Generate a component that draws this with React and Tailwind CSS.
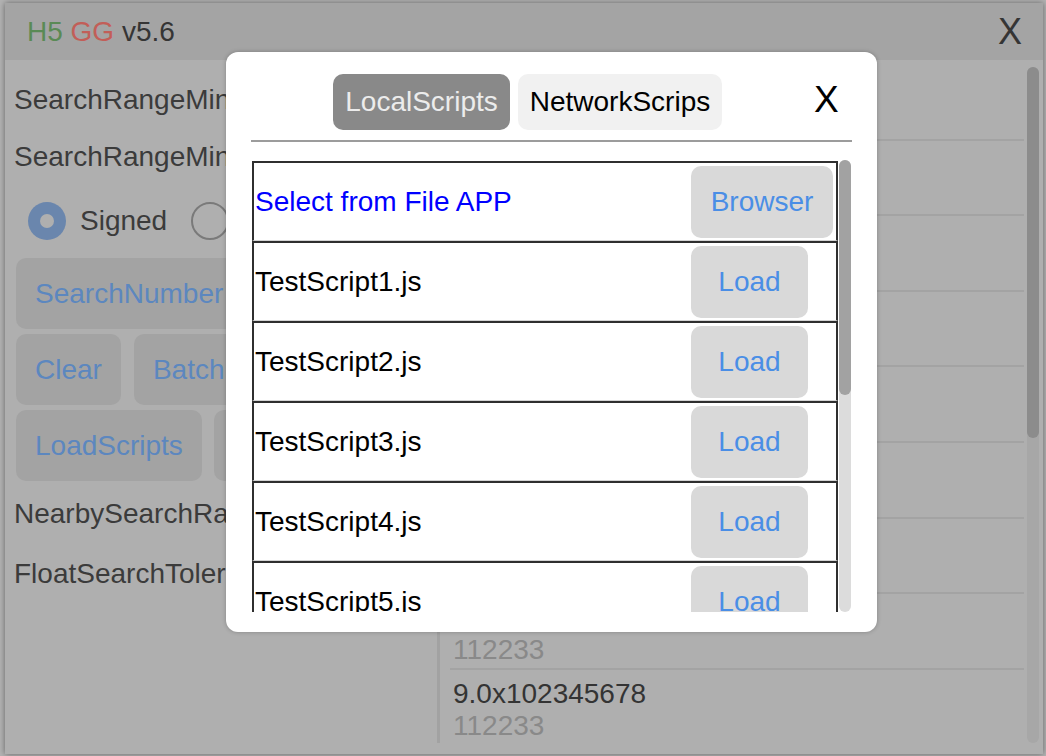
const font = { fontFamily: '"Liberation Sans", Arial, sans-serif' };

const rightRows = [
  { v: "1.0x102345678", s: "112233" },
  { v: "2.0x102345678", s: "112233" },
  { v: "3.0x102345678", s: "112233" },
  { v: "4.0x102345678", s: "112233" },
  { v: "5.0x102345678", s: "112233" },
  { v: "6.0x102345678", s: "112233" },
  { v: "7.0x102345678", s: "112233" },
  { v: "8.0x102345678", s: "112233" },
  { v: "9.0x102345678", s: "112233" },
];

const scripts = ["TestScript1.js", "TestScript2.js", "TestScript3.js", "TestScript4.js", "TestScript5.js"];

function GreyButton({ children, className = "" }) {
  return (
    <div className={`flex h-[71px] items-center rounded-[10px] bg-[#a3a3a3] px-[19px] text-[28px] text-[#5c87bf] ${className}`}>
      {children}
    </div>
  );
}

function ScriptRow({ name, label, blue, wide }) {
  return (
    <div className="flex h-[80px] shrink-0 items-center border-x-2 border-t-2 border-[#2f2f2f] border-b border-b-[#d4d4d4]">
      <div className={`w-[437px] pl-px text-[28px] ${blue ? "text-[#0000ff]" : "text-black"}`}>{name}</div>
      <div
        className={`flex h-[72px] items-center justify-center rounded-[10px] bg-[#d9d9d9] text-[28px] text-[#4a8ee6] ${wide ? "w-[142px]" : "w-[117px]"}`}
      >
        {label}
      </div>
    </div>
  );
}

export default function App() {
  return (
    <div className="relative h-[756px] w-[1046px] overflow-hidden bg-[#b3b3b3] pl-[5px] pt-[3px]" style={font}>
      {/* background window (dimmed) */}
      <div className="flex h-[751px] w-[1038px] flex-col bg-[#afafaf] shadow-[0_0_6px_rgba(0,0,0,0.45)]">
        <div className="flex h-[57px] shrink-0 items-center justify-between bg-[#a4a4a4] pl-[22px] pr-[21px]">
          <div className="text-[28px] text-[#353535]">
            <span className="text-[#5a8a55]">H5</span> <span className="text-[#c25e58]">GG</span> v5.6
          </div>
          <div className="text-[36px] leading-none text-[#353535]">X</div>
        </div>

        <div className="flex min-h-0 flex-1">
          {/* left settings column */}
          <div className="w-[432px] shrink-0 pl-[9px] text-[28px] text-[#3b3b3b]">
            <div className="mt-[24px] leading-[32px]">SearchRangeMin</div>
            <div className="mt-[25px] leading-[32px]">SearchRangeMin</div>
            <div className="mt-[29px] flex h-[38px] items-center">
              <div className="ml-[14px] flex h-[38px] w-[38px] items-center justify-center rounded-full bg-[#6a86ad]">
                <div className="h-[14px] w-[14px] rounded-full bg-[#afafaf]" />
              </div>
              <span className="ml-[14px]">Signed</span>
              <div className="ml-[24px] h-[38px] w-[38px] rounded-full border-2 border-[#7a7a7a]" />
              <span className="ml-[14px]">Unsigned</span>
            </div>
            <div className="ml-[2px] mt-[18px] flex">
              <GreyButton className="w-[380px]">SearchNumber</GreyButton>
            </div>
            <div className="ml-[2px] mt-[5px] flex gap-[13px]">
              <GreyButton>Clear</GreyButton>
              <GreyButton>BatchEdit</GreyButton>
            </div>
            <div className="ml-[2px] mt-[5px] flex gap-[12px]">
              <GreyButton>LoadScripts</GreyButton>
              <GreyButton>Reset</GreyButton>
            </div>
            <div className="mt-[17px] leading-[32px]">NearbySearchRange</div>
            <div className="mt-[28px] leading-[32px]">FloatSearchTolerance</div>
          </div>

          {/* right results column */}
          <div className="flex min-h-0 flex-1 pb-[11px] pt-[5px]">
            <div className="w-[3px] shrink-0 bg-[#a2a2a2]" />
            <div className="min-w-0 flex-1 overflow-hidden pl-[10px] pr-[3px]">
              {rightRows.map((r) => (
                <div key={r.v} className="h-[75.6px] border-b-2 border-[#a3a3a3] pl-[3px] pt-[8px] text-[28px] leading-[32px]">
                  <div className="text-[#343434]">{r.v}</div>
                  <div className="text-[#898989]">{r.s}</div>
                </div>
              ))}
            </div>
            <div className="mr-[4px] mt-[2px] flex w-[12px] shrink-0 flex-col rounded-full bg-[#a7a7a7]">
              <div className="h-[371px] rounded-full bg-[#8c8c8c]" />
            </div>
          </div>
        </div>
      </div>

      {/* script dialog */}
      <div className="absolute left-[226px] top-[52px] flex h-[580px] w-[651px] flex-col rounded-[12px] bg-white shadow-[0_0_4px_rgba(0,0,0,0.25)]">
        <div className="relative mt-[22px] flex h-[56px] shrink-0 items-center pl-[107px]">
          <div className="flex h-[56px] w-[177px] items-center justify-center rounded-[10px] bg-[#898989] text-[28px] text-[#ececec]">
            LocalScripts
          </div>
          <div className="ml-[8px] flex h-[56px] w-[204px] items-center justify-center rounded-[10px] bg-[#f1f1f1] text-[28px] text-black">
            NetworkScrips
          </div>
          <div className="absolute left-[588px] top-[6px] text-[37px] leading-[40px] text-black">X</div>
        </div>
        <div className="mx-[25px] mt-[10px] h-[2px] shrink-0 bg-[#9c9c9c]" />
        <div className="ml-[26px] mt-[18px] flex h-[452px] w-[599px] overflow-hidden">
          <div className="flex w-[586px] flex-col pt-px">
            <ScriptRow name="Select from File APP" label="Browser" blue wide />
            {scripts.map((s) => (
              <ScriptRow key={s} name={s} label="Load" />
            ))}
          </div>
          <div className="ml-[1px] flex w-[12px] flex-col rounded-full bg-[#dcdcdc]">
            <div className="h-[235px] rounded-full bg-[#a2a2a2]" />
          </div>
        </div>
      </div>
    </div>
  );
}
